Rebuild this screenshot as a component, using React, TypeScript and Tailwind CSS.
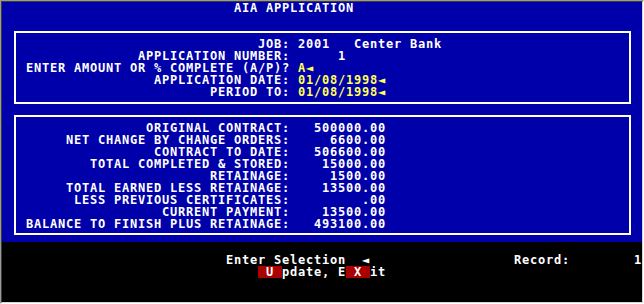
const sp = (n: number) => " ".repeat(n);

type Part = { t: string; y?: boolean };

function Row({ parts }: { parts: Part[] }) {
  return (
    <div className="h-[12px] whitespace-pre leading-[12px] flex">
      {parts.map((p, i) => (
        <span
          key={i}
          className={
            "inline-block h-[12px] leading-[12px] " +
            (p.y ? "text-[#ffff55]" : "text-white")
          }
        >
          {p.t}
        </span>
      ))}
    </div>
  );
}

const totals: [string, string][] = [
  ["ORIGINAL CONTRACT:", "500000.00"],
  ["NET CHANGE BY CHANGE ORDERS:", "6600.00"],
  ["CONTRACT TO DATE:", "506600.00"],
  ["TOTAL COMPLETED & STORED:", "15000.00"],
  ["RETAINAGE:", "1500.00"],
  ["TOTAL EARNED LESS RETAINAGE:", "13500.00"],
  ["LESS PREVIOUS CERTIFICATES:", ".00"],
  ["CURRENT PAYMENT:", "13500.00"],
  ["BALANCE TO FINISH PLUS RETAINAGE:", "493100.00"],
];

export default function App() {
  return (
    <div className="w-[644px] h-[304px] border border-t-[#9a9a9a] border-l-[#9a9a9a] border-r-white border-b-white">
      <div className="w-[642px] h-[302px] border border-t-[#3c3c3c] border-l-[#3c3c3c] border-r-[#d8d8d8] border-b-[#d8d8d8] font-['DejaVu_Sans_Mono',monospace] font-bold text-[12px] tracking-[0.776px]">
        <div className="h-[240px] bg-[#0000aa] flex flex-col">
          <Row parts={[{ t: sp(29) + "AIA APPLICATION" }]} />

          <div className="mt-[17px] ml-[12px] w-[617px] border-2 border-white pt-[5px] pb-[4px] pl-[2px]">
            <Row parts={[{ t: sp(30) + "JOB: 2001   Center Bank" }]} />
            <Row parts={[{ t: sp(15) + "APPLICATION NUMBER:" + sp(6) + "1" }]} />
            <Row
              parts={[
                { t: sp(1) + "ENTER AMOUNT OR % COMPLETE (A/P)? " },
                { t: "A◄", y: true },
              ]}
            />
            <Row
              parts={[
                { t: sp(17) + "APPLICATION DATE: " },
                { t: "01/08/1998◄", y: true },
              ]}
            />
            <Row
              parts={[
                { t: sp(24) + "PERIOD TO: " },
                { t: "01/08/1998◄", y: true },
              ]}
            />
          </div>

          <div className="mt-[11px] ml-[12px] w-[617px] border-2 border-white pt-[5px] pb-[3px] pl-[2px]">
            {totals.map(([label, value]) => (
              <Row key={label} parts={[{ t: label.padStart(34) + value.padStart(12) }]} />
            ))}
          </div>
        </div>

        <div className="h-[60px] bg-black pt-[12px]">
          <Row
            parts={[
              { t: sp(28) + "Enter Selection  ◄" + sp(18) + "Record:" + sp(8) + "1" },
            ]}
          />
          <div className="h-[12px] whitespace-pre leading-[12px] text-white flex">
            <span className="inline-block h-[12px]">{sp(32)}</span>
            <span className="inline-block h-[12px] bg-[#aa0000]">{" U "}</span>
            <span className="inline-block h-[12px]">{"pdate, E"}</span>
            <span className="inline-block h-[12px] bg-[#aa0000]">{" X "}</span>
            <span className="inline-block h-[12px]">{"it"}</span>
          </div>
        </div>
      </div>
    </div>
  );
}
